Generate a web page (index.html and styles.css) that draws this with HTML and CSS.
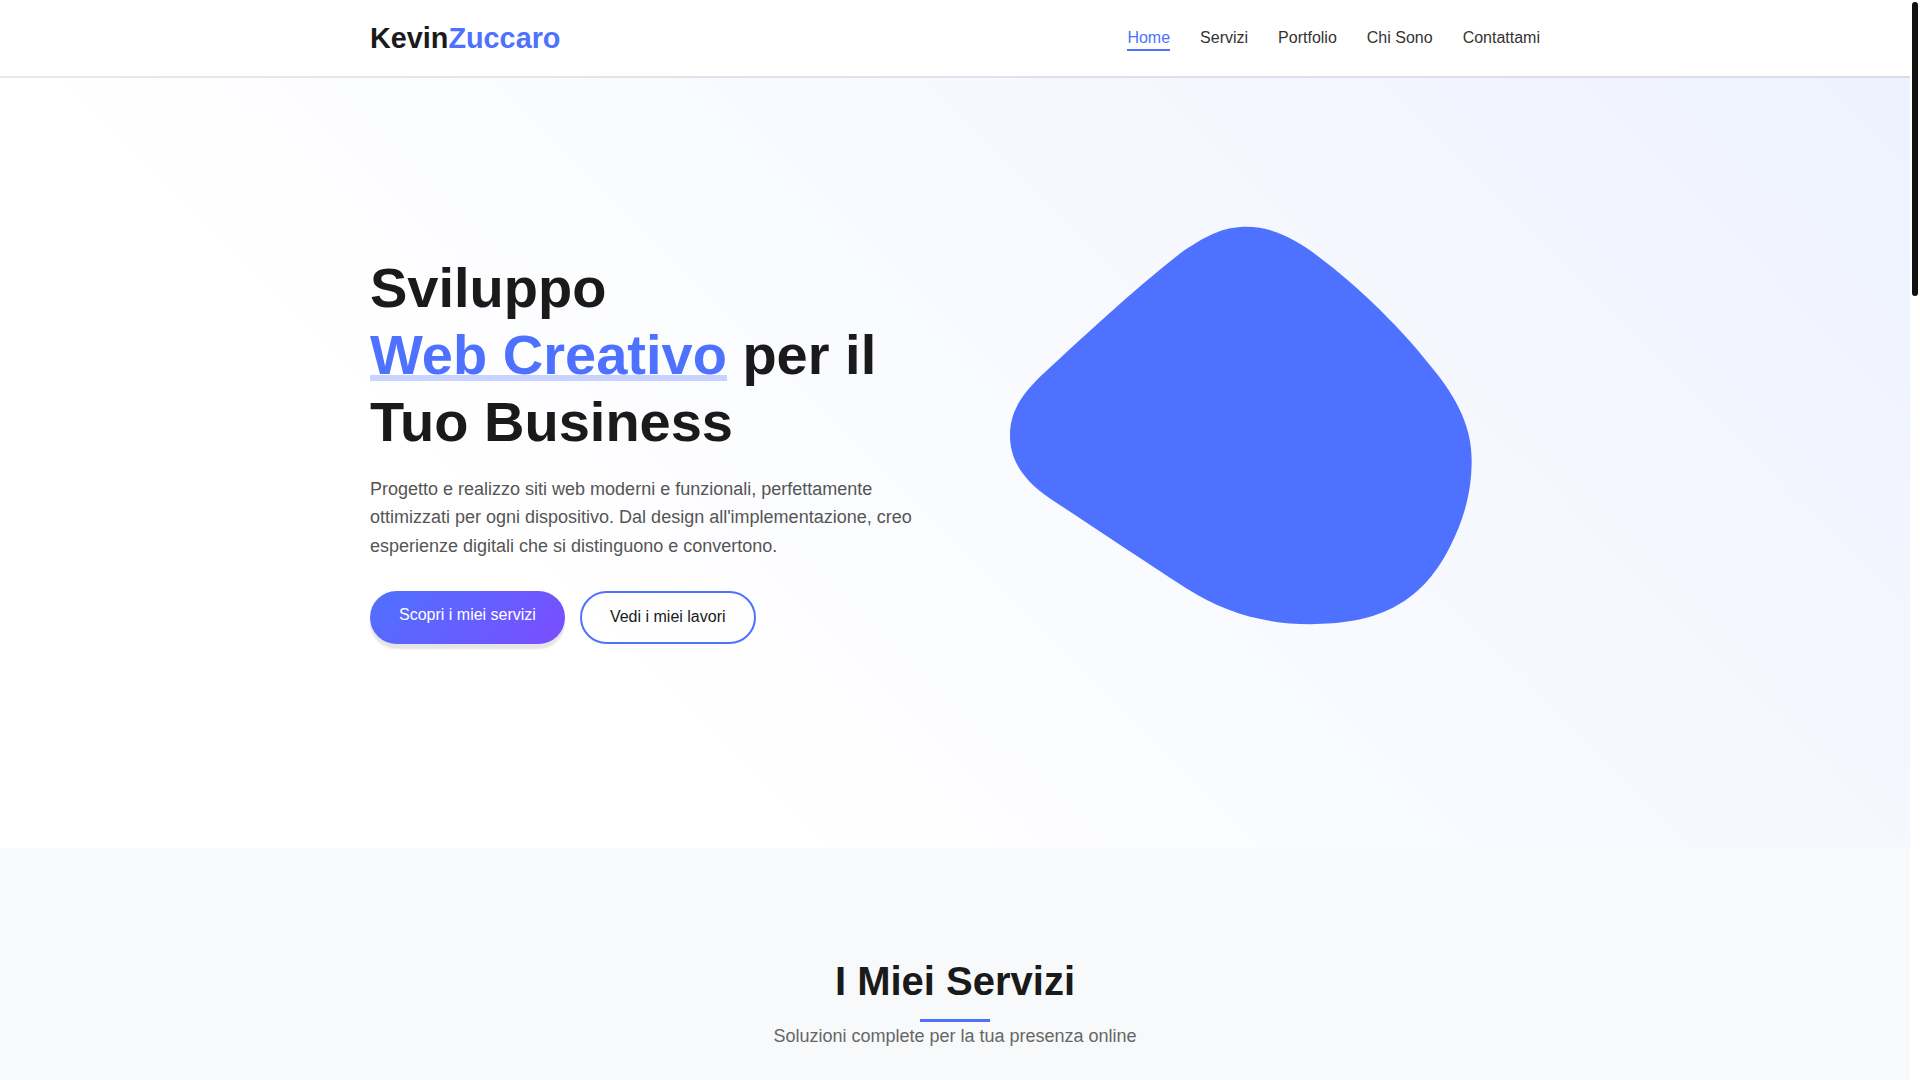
FILE: index.html
```html
<!DOCTYPE html>
<html lang="it">
<head>
<meta charset="utf-8">
<title>Kevin Zuccaro - Sviluppo Web Creativo</title>
<link rel="stylesheet" href="styles.css">
</head>
<body>
<div class="scroll-indicator" aria-hidden="true"><div class="scroll-indicator-thumb"></div></div>

<header class="site-header">
  <div class="container header-inner">
    <a class="logo" href="#home">Kevin<span>Zuccaro</span></a>
    <nav>
      <ul class="nav-list">
        <li><a class="nav-link active" href="#home">Home</a></li>
        <li><a class="nav-link" href="#servizi">Servizi</a></li>
        <li><a class="nav-link" href="#portfolio">Portfolio</a></li>
        <li><a class="nav-link" href="#chi-sono">Chi Sono</a></li>
        <li><a class="nav-link" href="#contatti">Contattami</a></li>
      </ul>
    </nav>
  </div>
</header>

<section class="hero" id="home">
  <div class="container hero-grid">
    <div class="hero-text">
      <h1 class="hero-title">Sviluppo <span class="highlight">Web Creativo</span> per il Tuo Business</h1>
      <p class="hero-desc">Progetto e realizzo siti web moderni e funzionali, perfettamente ottimizzati per ogni dispositivo. Dal design all'implementazione, creo esperienze digitali che si distinguono e convertono.</p>
      <div class="hero-buttons">
        <a class="btn btn-primary" href="#servizi">Scopri i miei servizi</a>
        <a class="btn btn-outline" href="#portfolio">Vedi i miei lavori</a>
      </div>
    </div>
    <div class="hero-visual">
      <svg class="blob" viewBox="21 -3.6 1659 1500" aria-hidden="true">
        <path d="M800 80 C880 80 950 120 1010 165 C1140 262 1270 390 1370 520 C1440 610 1475 690 1475 780 C1475 880 1450 960 1410 1040 C1320 1220 1180 1272 990 1272 C850 1272 730 1235 620 1165 C480 1075 340 980 210 895 C130 840 90 780 90 705 C90 630 130 580 180 530 C320 400 460 270 600 160 C680 105 730 80 800 80 Z"/>
      </svg>
    </div>
  </div>
</section>

<section class="services" id="servizi">
  <div class="container">
    <div class="section-header">
      <h2 class="section-title">I Miei Servizi</h2>
      <div class="section-line"></div>
      <p class="section-sub">Soluzioni complete per la tua presenza online</p>
    </div>
    <div class="cards">
      <div class="card">
        <div class="card-icon"><svg viewBox="0 0 24 24"><path d="M3 5h18v12H3z M8 21h8 M12 17v4"/></svg></div>
        <h3>Siti Web</h3>
        <p>Siti vetrina e aziendali veloci, moderni e ottimizzati per i motori di ricerca.</p>
      </div>
      <div class="card">
        <div class="card-icon"><svg viewBox="0 0 24 24"><path d="M6 6h15l-2 9H8z M6 6L5 3H2 M9 20h1 M17 20h1"/></svg></div>
        <h3>E-commerce</h3>
        <p>Negozi online completi, sicuri e facili da gestire per vendere ovunque.</p>
      </div>
      <div class="card">
        <div class="card-icon"><svg viewBox="0 0 24 24"><path d="M7 2h10v20H7z M11 18h2"/></svg></div>
        <h3>Web App</h3>
        <p>Applicazioni web su misura, responsive e pensate per ogni dispositivo.</p>
      </div>
    </div>
  </div>
</section>

<section class="portfolio" id="portfolio">
  <div class="container">
    <div class="section-header">
      <h2 class="section-title">Portfolio</h2>
      <div class="section-line"></div>
      <p class="section-sub">Alcuni dei progetti che ho realizzato</p>
    </div>
    <div class="works">
      <div class="work"></div>
      <div class="work"></div>
      <div class="work"></div>
      <div class="work"></div>
      <div class="work"></div>
      <div class="work"></div>
    </div>
  </div>
</section>

<section class="about" id="chi-sono">
  <div class="container">
    <div class="section-header">
      <h2 class="section-title">Chi Sono</h2>
      <div class="section-line"></div>
      <p class="section-sub">Sviluppatore web appassionato di design e tecnologia</p>
    </div>
    <p class="about-text">Da anni aiuto aziende e professionisti a costruire la loro presenza online con siti curati in ogni dettaglio.</p>
  </div>
</section>

<section class="contact" id="contatti">
  <div class="container">
    <div class="section-header">
      <h2 class="section-title">Contattami</h2>
      <div class="section-line"></div>
      <p class="section-sub">Raccontami il tuo progetto</p>
    </div>
  </div>
</section>

<footer class="site-footer">
  <div class="container">© 2024 Kevin Zuccaro. Tutti i diritti riservati.</div>
</footer>
</body>
</html>
```

FILE: styles.css
```css
* {
  box-sizing: border-box;
}

body {
  margin: 0;
  padding-right: 10px;
  font-family: "Liberation Sans", Arial, sans-serif;
  font-size: 16px;
  line-height: 1.6;
  color: #333333;
  background: #ffffff;
}

/* Scroll indicator (right edge) */
.scroll-indicator {
  position: fixed;
  top: 0;
  right: 0;
  width: 10px;
  height: 100vh;
  background: #ffffff;
  z-index: 200;
}

.scroll-indicator-thumb {
  position: absolute;
  top: 2px;
  left: 2px;
  width: 6px;
  height: 294px;
  border-radius: 3px;
  background: #111111;
}

.container {
  max-width: 1200px;
  margin: 0 auto;
  padding: 0 15px;
}

/* Header */
.site-header {
  position: sticky;
  top: 0;
  z-index: 100;
  background: #ffffff;
  box-shadow: 0 2px 0 rgba(0, 0, 0, 0.09);
}

.header-inner {
  height: 76px;
  display: flex;
  align-items: center;
  justify-content: space-between;
}

.logo {
  font-size: 1.8rem;
  font-weight: 700;
  color: #1a1a1a;
  text-decoration: none;
  line-height: 1.2;
}

.logo span {
  color: #4e71ff;
}

.nav-list {
  list-style: none;
  margin: 0;
  padding: 0;
  display: flex;
  gap: 30px;
}

.nav-link {
  position: relative;
  color: #333333;
  text-decoration: none;
  font-size: 16px;
}

.nav-link.active {
  color: #4e71ff;
}

.nav-link.active::after {
  content: "";
  position: absolute;
  left: 0;
  bottom: -5px;
  width: 100%;
  height: 2px;
  background: #4e71ff;
}

/* Hero */
.hero {
  background: linear-gradient(45deg, #ffffff 30%, #eef2ff 100%);
  padding: 122.75px 0 148.75px;
}

.hero-grid {
  display: grid;
  grid-template-columns: 1fr 1fr;
  gap: 64px;
  align-items: center;
}

.hero-title {
  margin: 0 0 19.5px;
  font-size: 3.5rem;
  line-height: 1.2;
  font-weight: 700;
  color: #1a1a1a;
}

.highlight {
  position: relative;
  display: inline-block;
  color: #4e71ff;
}

.highlight::after {
  content: "";
  position: absolute;
  left: 0;
  bottom: 7px;
  width: 100%;
  height: 6px;
  background: rgba(78, 113, 255, 0.3);
}

.hero-desc {
  margin: 0 0 30px;
  font-size: 1.125rem;
  line-height: 1.6;
  color: #555555;
}

.hero-buttons {
  display: flex;
  gap: 15px;
}

.btn {
  display: inline-block;
  font-size: 16px;
  line-height: 24px;
  text-decoration: none;
  border-radius: 50px;
}

.btn-primary {
  padding: 12px 29px 17px;
  color: #ffffff;
  background: linear-gradient(135deg, #4e71ff 0%, #7b4dff 100%);
  box-shadow: 0 5px 2px rgba(0, 0, 0, 0.1);
}

.btn-outline {
  padding: 12px 28px 13px;
  color: #1a1a1a;
  border: 2px solid #4e71ff;
  background: transparent;
}

.hero-visual {
  display: flex;
}

.blob {
  display: block;
  width: 100%;
  height: 500px;
  fill: #4e71ff;
}

/* Sections */
.services {
  background: #f8f9fa;
  padding: 109.4px 0 100px;
}

.section-header {
  text-align: center;
}

.section-title {
  margin: 0;
  font-size: 2.5rem;
  line-height: 1.2;
  font-weight: 700;
  color: #1a1a1a;
}

.section-line {
  width: 70px;
  height: 3px;
  margin: 14px auto 0;
  background: #4e71ff;
}

.section-sub {
  margin: 0;
  font-size: 1.125rem;
  line-height: 1.6;
  color: #666666;
}

.cards {
  margin-top: 60px;
  display: grid;
  grid-template-columns: repeat(3, 1fr);
  gap: 30px;
}

.card {
  background: #ffffff;
  border-radius: 12px;
  padding: 40px 30px;
  box-shadow: 0 5px 20px rgba(0, 0, 0, 0.05);
}

.card h3 {
  margin: 20px 0 10px;
  font-size: 1.4rem;
  color: #1a1a1a;
}

.card p {
  margin: 0;
  color: #555555;
}

.card-icon {
  width: 60px;
  height: 60px;
  border-radius: 12px;
  background: linear-gradient(135deg, #4e71ff 0%, #7b4dff 100%);
  display: flex;
  align-items: center;
  justify-content: center;
}

.card-icon svg {
  width: 28px;
  height: 28px;
  fill: none;
  stroke: #ffffff;
  stroke-width: 2;
  stroke-linecap: round;
  stroke-linejoin: round;
}

.portfolio {
  padding: 100px 0;
  background: #ffffff;
}

.works {
  margin-top: 60px;
  display: grid;
  grid-template-columns: repeat(3, 1fr);
  gap: 30px;
}

.work {
  height: 260px;
  border-radius: 12px;
  background: linear-gradient(135deg, #e8edff 0%, #f1ebff 100%);
}

.about {
  padding: 100px 0;
  background: #f8f9fa;
  min-height: 700px;
}

.about-text {
  max-width: 700px;
  margin: 40px auto 0;
  text-align: center;
  font-size: 1.125rem;
  color: #555555;
}

.contact {
  padding: 100px 0;
  background: #ffffff;
  min-height: 740px;
}

.site-footer {
  background: #1a1a1a;
  color: #cccccc;
  text-align: center;
  padding: 40px 0;
}
```
